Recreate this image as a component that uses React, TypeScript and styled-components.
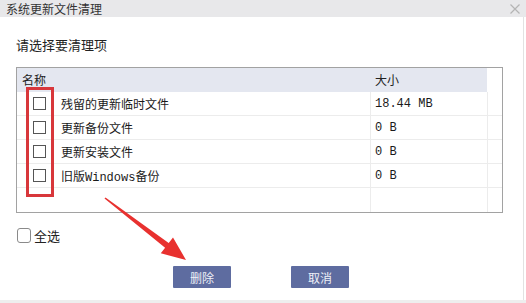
import React from "react";
import styled, { createGlobalStyle } from "styled-components";

const Global = createGlobalStyle`
  html, body { margin: 0; padding: 0; background: #fff; }
  body { width: 526px; height: 303px; overflow: hidden; font-family: "Noto Sans CJK SC", "Liberation Sans", sans-serif; }
`;

const Window = styled.div`
  position: relative;
  width: 526px;
  height: 303px;
  display: flex;
  flex-direction: column;
  background: #fff;
`;

const TitleBar = styled.div`
  height: 17px;
  flex: none;
  background: #e8e8ea;
  display: flex;
  align-items: center;
  justify-content: space-between;
  padding: 0 6px;
  font-size: 12px;
  line-height: 17px;
  color: #333;
`;

const Close = styled.svg`
  width: 10px;
  height: 10px;
`;

const Body = styled.div`
  flex: 1;
  display: flex;
  flex-direction: column;
  padding: 0 20px 0 16px;
  border-right: 1px solid #e2e2e2;
  margin-right: 2px;
`;

const Prompt = styled.div`
  margin-top: 20px;
  height: 16px;
  font-size: 13px;
  line-height: 16px;
  color: #222;
`;

const Table = styled.div`
  margin-top: 14px;
  height: 146px;
  box-sizing: border-box;
  border: 1px solid #a2a2a2;
  display: grid;
  grid-template-columns: 353px 117px 1fr;
  grid-template-rows: 24px repeat(4, 24px) 1fr;
`;

const HeadCell = styled.div<{ $blank?: boolean }>`
  background: ${(p) => (p.$blank ? "#fff" : "#e4e7f0")};
  font-size: 12px;
  line-height: 24px;
  color: #222;
  padding-left: ${(p) => (p.$blank ? 0 : 5)}px;
`;

const Cell = styled.div<{ $last?: boolean; $divider?: boolean }>`
  display: flex;
  align-items: center;
  border-bottom: ${(p) => (p.$last ? "none" : "1px solid #ececec")};
  border-left: ${(p) => (p.$divider ? "1px solid #ececec" : "none")};
  box-sizing: border-box;
  font-size: 12px;
  color: #1a1a1a;
`;

const NameCell = styled(Cell)`
  padding-left: 16px;
  gap: 15px;
  font-family: "Liberation Mono", "Noto Sans CJK SC", monospace;
`;

const SizeCell = styled(Cell)`
  padding-left: 4px;
  font-family: "Liberation Mono", "Noto Sans CJK SC", monospace;
  font-size: 12px;
`;

const Box = styled.span`
  width: 11px;
  height: 11px;
  border: 1px solid #555;
  background: #fff;
  flex: none;
`;

const SelectAll = styled.label`
  margin-top: 15px;
  display: flex;
  align-items: center;
  gap: 3px;
  height: 15px;
  font-size: 13px;
  color: #222;
  margin-left: 1px;
`;

const RoundBox = styled.span`
  width: 12px;
  height: 13px;
  border: 1px solid #8a8a8a;
  border-radius: 3px;
  flex: none;
`;

const Buttons = styled.div`
  margin-top: 23px;
  display: flex;
  gap: 60px;
  padding-left: 157px;
`;

const Button = styled.button`
  width: 58px;
  height: 22px;
  border: none;
  border-radius: 1px;
  background: #5e6ca0;
  color: #eef0f7;
  font-family: "Noto Sans CJK SC", sans-serif;
  font-size: 12px;
  padding: 0;
`;

const BottomBand = styled.div`
  margin-top: auto;
  height: 3px;
  background: #eeeeee;
  flex: none;
`;

const Highlight = styled.div`
  position: absolute;
  left: 26px;
  top: 87px;
  width: 22px;
  height: 104px;
  border: 3px solid #d8373b;
`;

const Arrow = styled.svg`
  position: absolute;
  left: 0;
  top: 0;
  pointer-events: none;
`;

const rows = [
  { name: "残留的更新临时文件", size: "18.44 MB" },
  { name: "更新备份文件", size: "0 B" },
  { name: "更新安装文件", size: "0 B" },
  { name: "旧版Windows备份", size: "0 B" },
];

export default function App() {
  return (
    <Window>
      <Global />
      <TitleBar>
        <span>系统更新文件清理</span>
        <Close viewBox="0 0 10 10">
          <path d="M0.5 0.5 L9.5 9.5 M9.5 0.5 L0.5 9.5" stroke="#b4b4b4" strokeWidth="1.2" />
        </Close>
      </TitleBar>
      <Body>
        <Prompt>请选择要清理项</Prompt>
        <Table>
          <HeadCell>名称</HeadCell>
          <HeadCell>大小</HeadCell>
          <HeadCell $blank />
          {rows.map((r) => (
            <React.Fragment key={r.name}>
              <NameCell>
                <Box />
                <span>{r.name}</span>
              </NameCell>
              <SizeCell $divider>{r.size}</SizeCell>
              <Cell $divider />
            </React.Fragment>
          ))}
          <Cell $last />
          <Cell $last $divider />
          <Cell $last $divider />
        </Table>
        <SelectAll>
          <RoundBox />
          <span>全选</span>
        </SelectAll>
        <Buttons>
          <Button>删除</Button>
          <Button>取消</Button>
        </Buttons>
      </Body>
      <BottomBand />
      <Highlight />
      <Arrow width="526" height="303" viewBox="0 0 526 303">
        <polygon
          points="105.5,197.4 168.7,243 173,237.5 186,260 160.8,253.3 165.1,247.8 104.5,198.6"
          fill="#e8312f"
        />
      </Arrow>
    </Window>
  );
}
